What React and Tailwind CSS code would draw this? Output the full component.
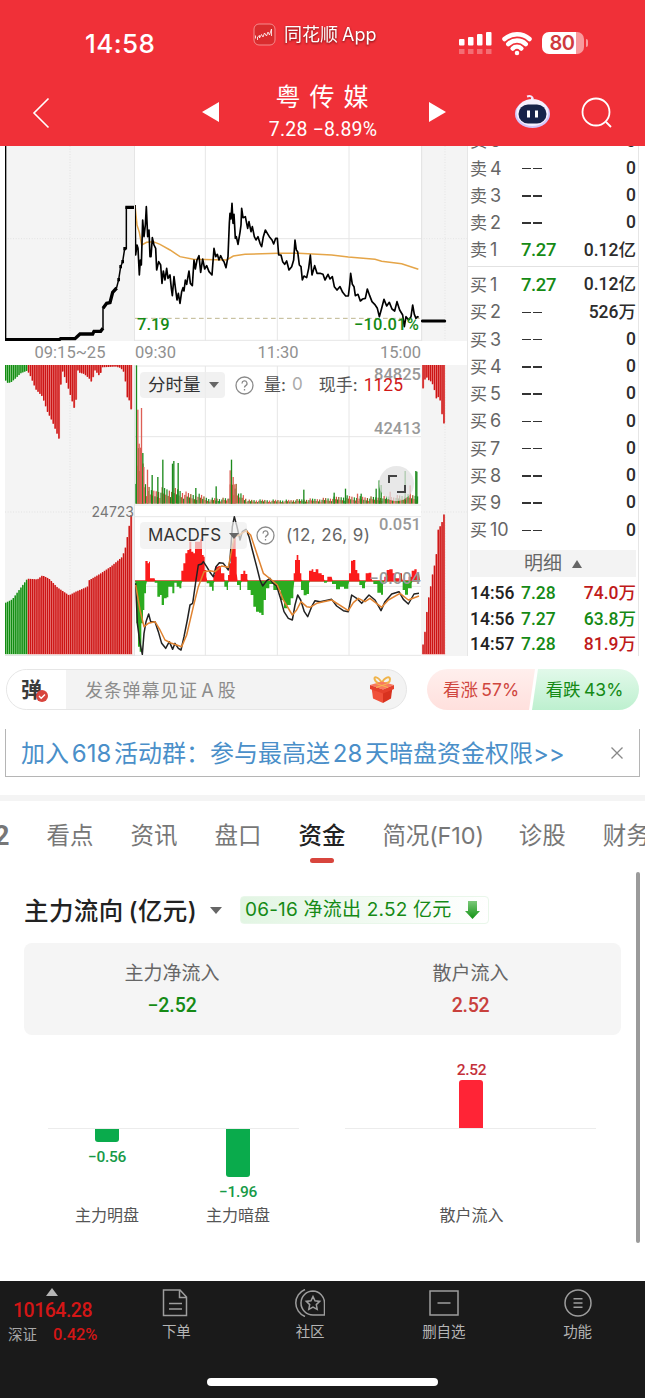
import { Wifi } from 'lucide-react';

/* Chart series are kept in thirds of a pixel, the svg viewBoxes scale them down. */
const PRICE = [
  [405, 180], [407, 330], [411, 300], [414, 310], [418, 390], [421, 345], [424, 360], [428, 225], [432, 275], [436, 240],
  [439, 185], [443, 275], [447, 255], [450, 335], [453, 335], [457, 278], [462, 300], [467, 310], [470, 375], [476, 350],
  [482, 360], [486, 415], [490, 378], [495, 405], [500, 370], [504, 400], [510, 390], [514, 430], [517, 452], [522, 395],
  [527, 435], [531, 465], [535, 445], [540, 475], [545, 440], [549, 428], [552, 438], [556, 405], [560, 418], [563, 400],
  [567, 378], [571, 415], [577, 422], [582, 345], [586, 372], [591, 345], [597, 332], [602, 382], [608, 342], [614, 372],
  [620, 362], [627, 380], [636, 390], [642, 310], [647, 335], [652, 328], [657, 345], [662, 332], [668, 345], [672, 350],
  [678, 368], [684, 335], [688, 235], [690, 205], [693, 222], [696, 175], [699, 235], [702, 208], [706, 280], [709, 275],
  [714, 298], [720, 262], [723, 240], [725, 190], [729, 218], [736, 215], [743, 250], [747, 230], [753, 260], [757, 245],
  [763, 275], [768, 285], [774, 275], [780, 295], [785, 305], [790, 275], [796, 255], [802, 265], [808, 275], [816, 285],
  [821, 297], [827, 280], [832, 280], [836, 330], [843, 330], [848, 350], [854, 358], [860, 348], [867, 375], [875, 365],
  [881, 345], [885, 285], [889, 315], [893, 320], [898, 360], [903, 365], [907, 405], [912, 393], [920, 398], [926, 370],
  [931, 330], [936, 390], [944, 362], [951, 385], [960, 385], [969, 388], [975, 405], [984, 388], [990, 402], [997, 395],
  [1003, 425], [1011, 435], [1020, 425], [1028, 442], [1037, 453], [1045, 453], [1049, 420], [1052, 385], [1057, 418], [1062, 425],
  [1066, 452], [1074, 448], [1081, 468], [1088, 462], [1096, 460], [1102, 432], [1109, 452], [1116, 470], [1124, 478], [1132, 490],
  [1138, 515], [1145, 490], [1152, 463], [1160, 483], [1168, 472], [1176, 492], [1184, 498], [1191, 470], [1199, 495], [1208, 510],
  [1213, 545], [1218, 515], [1226, 525], [1233, 515], [1238, 480], [1243, 508], [1248, 520], [1252, 515], [1256, 517],
];

const AVERAGE = [
  [405, 180], [411, 240], [418, 262], [425, 300], [440, 292], [460, 290], [480, 298], [510, 315], [540, 335], [580, 343],
  [680, 345], [700, 333], [735, 328], [835, 325], [895, 325], [995, 330], [1045, 336], [1125, 343], [1145, 349], [1205, 356], [1255, 373],
];

const AUCTION = [
  [17, 585], [178, 585], [182, 582], [225, 582], [240, 567], [278, 567], [282, 559], [302, 559], [309, 550], [309, 490],
  [320, 475], [330, 473], [334, 458], [338, 442], [350, 427], [356, 404], [362, 365], [368, 350], [374, 311], [379, 311], [379, 187], [402, 187],
];

const DIF = [
  [407, 670], [412, 790], [420, 850], [427, 883], [432, 820], [438, 785], [446, 762], [452, 785], [465, 785], [475, 815],
  [485, 850], [497, 865], [508, 845], [518, 868], [525, 850], [535, 865], [543, 870], [552, 830], [562, 780], [570, 735],
  [578, 730], [588, 660], [595, 615], [605, 612], [610, 605], [620, 620], [632, 640], [640, 650], [648, 620], [658, 608],
  [670, 610], [685, 630], [690, 600], [697, 500], [703, 470], [711, 500], [720, 540], [727, 515], [738, 508], [747, 530],
  [757, 570], [770, 620], [780, 660], [788, 678], [800, 662], [810, 655], [817, 668], [830, 678], [840, 710], [852, 755],
  [865, 775], [877, 780], [885, 735], [893, 705], [902, 720], [913, 755], [923, 770], [935, 740], [945, 722], [960, 725],
  [975, 722], [995, 718], [1010, 738], [1030, 752], [1045, 755], [1055, 705], [1070, 715], [1085, 730], [1107, 705], [1125, 720],
  [1143, 752], [1155, 725], [1175, 702], [1197, 695], [1210, 718], [1225, 732], [1242, 702], [1257, 700],
];

const DEA = [
  [407, 675], [420, 750], [432, 800], [445, 790], [465, 785], [480, 810], [495, 840], [515, 850], [545, 860], [560, 825],
  [580, 740], [595, 680], [612, 635], [630, 632], [645, 635], [665, 618], [685, 622], [695, 570], [703, 530], [718, 525],
  [738, 512], [752, 525], [770, 580], [790, 640], [815, 660], [832, 675], [850, 720], [877, 765], [890, 750], [903, 725],
  [920, 740], [930, 742], [950, 730], [995, 720], [1045, 752], [1060, 728], [1075, 715], [1095, 725], [1110, 715], [1145, 742],
  [1165, 720], [1200, 700], [1225, 720], [1257, 708],
];

// each hump is a run of points closed on the zero line
const MACD_UP = [
  [[436, 603], [440, 603], [443, 610], [447, 605], [450, 655], [464, 657]],
  [[544, 632], [550, 610], [556, 580], [562, 570], [568, 545], [574, 575], [580, 580], [585, 545], [600, 538], [606, 585], [611, 590], [614, 630], [619, 650]],
  [[640, 645], [645, 620], [655, 618], [663, 640], [673, 658]],
  [[684, 645], [688, 610], [693, 560], [699, 520], [704, 530], [707, 590], [710, 640]],
  [[722, 642], [730, 632], [736, 642], [742, 658]],
  [[881, 640], [885, 600], [890, 585], [895, 600], [900, 640], [904, 658]],
  [[927, 632], [935, 628], [940, 636], [947, 628], [955, 640], [965, 645], [972, 658]],
  [[982, 650], [995, 650]],
  [[1047, 640], [1053, 602], [1059, 600], [1066, 630], [1072, 640], [1078, 658]],
  [[1097, 640], [1106, 638], [1114, 652]],
  [[1153, 650], [1160, 630], [1168, 628], [1178, 640], [1186, 655], [1198, 640], [1206, 655]],
  [[1226, 650], [1235, 632], [1243, 628], [1250, 640], [1257, 640]],
];
const MACD_DOWN = [
  [[406, 680], [409, 790], [414, 860], [419, 875], [424, 790], [429, 750], [433, 700], [438, 675]],
  [[464, 668], [472, 710], [480, 705], [485, 735], [492, 715], [500, 712], [505, 680], [517, 700], [523, 668], [530, 680], [538, 685], [544, 672]],
  [[620, 670], [628, 680], [636, 692], [641, 670]],
  [[673, 680], [680, 690], [684, 670]],
  [[711, 675], [719, 690], [723, 668]],
  [[742, 690], [752, 705], [760, 740], [768, 755], [777, 758], [784, 765], [791, 720], [798, 685], [808, 672], [820, 690], [832, 690], [842, 720], [852, 745], [862, 735], [872, 715], [880, 690]],
  [[903, 690], [911, 706], [920, 702], [927, 670]],
  [[972, 668], [980, 668]],
  [[996, 672], [1008, 688], [1020, 680], [1032, 686], [1045, 675]],
  [[1078, 675], [1086, 685], [1095, 670]],
  [[1120, 672], [1132, 698], [1143, 704], [1149, 675]],
  [[1208, 690], [1215, 704], [1224, 685], [1235, 670]],
];

// upper envelope of the minute volume bars, then the isolated spikes
const VOLUME_LEVEL = [
  [405, 170], [426, 150], [436, 60], [450, 40], [490, 48], [535, 45], [560, 32], [600, 28], [625, 18], [684, 16],
  [690, 80], [706, 60], [712, 30], [725, 36], [740, 12], [870, 12], [985, 18], [1035, 24], [1120, 20], [1200, 26], [1258, 28],
];
const VOLUME_SPIKES = [
  [409, 415, 'g'], [413, 282, 'r'], [417, 180, 'r'], [421, 168, 'r'], [424, 287, 'r'], [428, 152, 'g'], [431, 110, 'r'], [442, 102, 'r'],
  [456, 86, 'g'], [473, 80, 'g'], [488, 132, 'g'], [517, 120, 'g'], [521, 128, 'g'], [534, 122, 'g'], [587, 47, 'g'], [648, 52, 'g'],
  [690, 100, 'r'], [694, 132, 'g'], [699, 80, 'r'], [704, 58, 'r'], [911, 42, 'g'], [1002, 33, 'g'], [1036, 45, 'g'], [1072, 30, 'r'],
  [1083, 30, 'g'], [1128, 45, 'g'], [1137, 70, 'g'], [1143, 56, 'g'], [1170, 36, 'r'], [1215, 98, 'g'], [1230, 55, 'r'], [1247, 98, 'g'], [1250, 96, 'g'],
];

const AUCTION_TOP = [
  [15, 62], [22, 70], [32, 66], [45, 55], [60, 40], [80, 32], [90, 50], [105, 88], [125, 110], [140, 155], [155, 185],
  [178, 245], [181, 22], [188, 40], [205, 92], [225, 160], [228, 25], [235, 38], [250, 42], [265, 55], [275, 70], [280, 28],
  [298, 50], [303, 22], [345, 20], [360, 24], [372, 40], [378, 110], [385, 118], [390, 150], [398, 138],
];
const AUCTION_BOTTOM = [
  [15, 728], [35, 718], [55, 690], [80, 656], [110, 658], [125, 646], [145, 656], [170, 682], [205, 706], [225, 695],
  [260, 680], [263, 662], [300, 640], [330, 620], [365, 590], [375, 560], [385, 500], [391, 470], [394, 395], [399, 395],
];
const AFTER_TOP = [[1266, 90], [1275, 48], [1283, 60], [1293, 66], [1300, 85], [1308, 120], [1316, 105], [1325, 170], [1333, 205]];
const AFTER_BOTTOM = [[1266, 860], [1275, 800], [1280, 735], [1288, 690], [1296, 640], [1306, 595], [1312, 510], [1323, 490], [1333, 450]];

const SELLS = [
  ['卖5', '--', '0'],
  ['卖4', '--', '0'],
  ['卖3', '--', '0'],
  ['卖2', '--', '0'],
  ['卖1', '7.27', '0.12亿'],
];
const BUYS = [
  ['买1', '7.27', '0.12亿'],
  ['买2', '--', '526万'],
  ['买3', '--', '0'],
  ['买4', '--', '0'],
  ['买5', '--', '0'],
  ['买6', '--', '0'],
  ['买7', '--', '0'],
  ['买8', '--', '0'],
  ['买9', '--', '0'],
  ['买10', '--', '0'],
];
const TRADES = [
  ['14:56', '7.28', '74.0万', 'text-[#c01a1a]'],
  ['14:56', '7.27', '63.8万', 'text-[#158a15]'],
  ['14:57', '7.28', '81.9万', 'text-[#c01a1a]'],
];
const TABS = ['看点', '资讯', '盘口', '资金', '简况(F10)', '诊股', '财务'];

const toPoints = (list) => list.map((p) => p.join(',')).join(' ');

const levelAt = (list, x) => {
  const i = list.findIndex((p) => p[0] >= x);
  if (i <= 0) return i === 0 ? list[0][1] : list[list.length - 1][1];
  const [x0, y0] = list[i - 1];
  const [x1, y1] = list[i];
  return y0 + ((y1 - y0) * (x - x0)) / (x1 - x0);
};

const steps = (from, to, step) => Array.from({ length: Math.floor((to - from) / step) }, (_, i) => from + i * step);

const humpPath = (hump) => {
  const first = hump[0][0];
  const last = hump[hump.length - 1][0];
  return `M${first} 663 ${hump.map(([x, y], i) => `L${x} ${y}${hump[i + 1] ? ` H${hump[i + 1][0]}` : ''}`).join(' ')} L${last + 3} 663Z`;
};

const AuctionBars = ({ top, bottom, from, to, greenUntil = 0 }) => (
  <g>
    {steps(from, to, 5.7).map((x) => {
      const color = x < greenUntil ? '#128c12' : '#cc1414';
      const soft = x < greenUntil ? '#b9ecb4' : '#f9a3a0';
      const yTop = levelAt(top, x);
      const yBottom = levelAt(bottom, x);
      return (
        <g key={x}>
          <rect x={x} y="15" width="5.7" height={yTop - 17} fill={soft} />
          <rect x={x} y={yBottom + 2} width="5.7" height={882 - yBottom} fill={soft} />
          <rect x={x} y="15" width="4.3" height={yTop - 15} fill={color} />
          <rect x={x} y={yBottom} width="4.3" height={882 - yBottom} fill={color} />
        </g>
      );
    })}
  </g>
);

const PriceRow = () => (
  <div className="flex h-[195px]">
    <svg className="h-full w-[130px] bg-[#f4f4f4]" viewBox="15 3 390 585">
      <path d="M210 3V588M15 281H405" stroke="#e2e2e2" strokeWidth="3" strokeDasharray="3 5" />
      <path d="M404 3V588" stroke="#e2e2e2" strokeWidth="3" />
      <path d="M17 3V588" stroke="#000" strokeWidth="4" />
      <polyline points={toPoints(AUCTION)} fill="none" stroke="#000" strokeWidth="4.5" />
      <path d="M17 584H178L182 581H225L240 567H278L282 559H302L309 550M309 490L320 475L330 473L338 442L350 429M376 187H402M352 404h8M358 365h8M364 350h8M370 311h8" fill="none" stroke="#000" strokeWidth="10" />
    </svg>
    <div className="relative h-full w-[286px]">
      <svg className="h-full w-full" viewBox="405 3 858 585">
        <path d="M616 3V588M832 3V588M1047 3V588M405 281H1263M405 586H1263" stroke="#e6e6e6" strokeWidth="3" />
        <path d="M405 520H1263" stroke="#bfb690" strokeWidth="3" strokeDasharray="14 10" />
        <polyline points={toPoints(AVERAGE)} fill="none" stroke="#e5a548" strokeWidth="4.5" />
        <polyline points={toPoints(PRICE)} fill="none" stroke="#000" strokeWidth="5" strokeLinejoin="round" />
      </svg>
      <span className="absolute bottom-[7px] left-[2px] font-[Roboto] text-[16.5px] leading-[18px] font-medium text-[#158a15]">7.19</span>
      <span className="absolute right-[2px] bottom-[7px] font-[Roboto] text-[16.5px] leading-[18px] font-medium tracking-[0.2px] text-[#158a15]">−10.01%</span>
    </div>
    <svg className="h-full w-[46px] bg-[#f4f4f4]" viewBox="1263 3 138 585">
      <path d="M1335 3V588M1263 281H1401" stroke="#e4e4e4" strokeWidth="3" strokeDasharray="3 5" />
      <path d="M1265 3V588" stroke="#e2e2e2" strokeWidth="3" />
      <path d="M1267 528H1334" stroke="#000" strokeWidth="9" strokeLinecap="round" />
    </svg>
  </div>
);

const VolumeBars = () => (
  <g>
    {steps(406, 1256, 3.58).map((x, i) => {
      const jitter = 0.35 + (((i * 7919) % 31) / 31) * 0.75;
      const height = Math.max(4, levelAt(VOLUME_LEVEL, x) * jitter);
      const color = ['#1c8a1c', '#e0584e', '#8a5a14', '#1c8a1c', '#c8503c'][(i * 13 + (i % 7)) % 5];
      return <rect key={x} x={x} y={431 - height} width="3.6" height={height} fill={color} />;
    })}
    {VOLUME_SPIKES.map(([x, height, side]) => (
      <rect key={x} x={x - 1.5} y={431 - height} width="4" height={height} fill={side === 'g' ? '#1c8a1c' : '#dd5f55'} />
    ))}
  </g>
);

const HelpMark = () => (
  <svg className="size-[19px]" viewBox="0 0 19 19" fill="none" stroke="#8a8a8a" strokeWidth="1.3">
    <circle cx="9.5" cy="9.5" r="8.5" />
    <path d="M7 7.4a2.5 2.5 0 1 1 3.7 2.2c-.8.5-1.2.9-1.2 2M9.5 13v1.5" />
  </svg>
);

const IndicatorRow = () => (
  <div className="flex h-[291px]">
    <div className="relative h-full w-[130px] bg-[#f4f4f4]">
      <svg className="h-full w-full" viewBox="15 15 390 873">
        <path d="M210 15V888M15 456H405" stroke="#e2e2e2" strokeWidth="3" strokeDasharray="3 5" />
        <AuctionBars top={AUCTION_TOP} bottom={AUCTION_BOTTOM} from={15} to={402} greenUntil={78} />
        <path d="M404 15V888M15 886H405" stroke="#e2e2e2" strokeWidth="3" />
      </svg>
      <span className="absolute top-[138px] right-[1px] font-[Inter] text-[14px] leading-[18px] text-[#777]">24723</span>
    </div>
    <div className="relative h-full w-[286px]">
      <svg className="h-full w-full" viewBox="405 15 858 873">
        <path d="M405 18H1263M405 230H1263M405 435H1263M405 470H1263M405 679H1263M405 886H1263M616 18V435M832 18V435M1047 18V435M616 470V886M832 470V886M1047 470V886" stroke="#e6e6e6" strokeWidth="3" />
        <VolumeBars />
        <path d="M405 663H1258" stroke="#c33a1c" strokeWidth="4" />
        <path d={MACD_UP.map(humpPath).join('')} fill="#fb1b1b" />
        <path d={MACD_DOWN.map(humpPath).join('')} fill="#2bab20" />
        <polyline points={toPoints(DIF)} fill="none" stroke="#222" strokeWidth="4.5" strokeLinejoin="round" />
        <polyline points={toPoints(DEA)} fill="none" stroke="#e08330" strokeWidth="4.5" strokeLinejoin="round" />
      </svg>

      <div className="absolute top-[7px] left-[5px] flex h-[26px] items-center text-[17px] text-[#555]">
        <button type="button" className="flex h-[26px] w-[85px] items-center gap-2 rounded-sm bg-[#eeeeee]/80 pl-2 text-[#333]">
          <span className="pt-px text-[17.5px]">分时量</span>
          <span className="border-x-5 border-t-6 border-x-transparent border-t-[#666]" />
        </button>
        <span className="ml-[10px]"><HelpMark /></span>
        <span className="ml-[10px] pt-px">量:</span>
        <span className="ml-[6px] text-[#aaa]">0</span>
        <span className="ml-[16px] pt-px">现手:</span>
      </div>
      <span className="absolute top-[1px] right-0 font-[Roboto] text-[16.5px] leading-[18px] font-medium text-[#999]">84825</span>
      <span className="absolute top-[11px] right-[18px] font-[Roboto] text-[17.5px] leading-[18px] text-[#d01818]">1125</span>
      <span className="absolute top-[55px] right-0 font-[Roboto] text-[16.5px] leading-[18px] font-medium text-[#999]">42413</span>
      <span className="absolute top-[101px] right-[7px] flex size-[35px] items-center justify-center rounded-full bg-[#e0e0e0]/75">
        <svg className="size-[18px]" viewBox="0 0 18 18" fill="none" stroke="#444" strokeWidth="2">
          <path d="M1 8V1h8M17 10v7h-8" />
        </svg>
      </span>

      <div className="absolute top-[157px] left-[5px] flex h-[27px] items-center text-[17px] text-[#666]">
        <button type="button" className="flex h-[27px] w-[107px] items-center gap-2 rounded-sm bg-[#eeeeee]/70 pl-2 text-[#333]">
          <span className="text-[17px] tracking-[0.2px]">MACDFS</span>
          <span className="border-x-5 border-t-6 border-x-transparent border-t-[#666]" />
        </button>
        <span className="ml-[9px]"><HelpMark /></span>
        <span className="ml-[11px] text-[17px] tracking-[0.4px]">(12, 26, 9)</span>
      </div>
      <span className="absolute top-[151px] right-0 font-[Roboto] text-[16.5px] leading-[18px] font-medium text-[#999]">0.051</span>
      <span className="absolute top-[205px] right-0 font-[Roboto] text-[16.5px] leading-[18px] font-medium text-[#999]">−0.004</span>
    </div>
    <svg className="h-full w-[46px] bg-[#f4f4f4]" viewBox="1263 15 138 873">
      <path d="M1335 15V888M1263 456H1401" stroke="#e4e4e4" strokeWidth="3" strokeDasharray="3 5" />
      <AuctionBars top={AFTER_TOP} bottom={AFTER_BOTTOM} from={1267} to={1338} />
    </svg>
  </div>
);

const BookRow = ({ row }) => {
  const [label, price, volume] = row;
  return (
    <div className="flex h-[27.25px] shrink-0 items-center leading-none">
      <span className="w-[51px] text-[17px] whitespace-nowrap text-[#666]">
        {label[0]}
        <span className="ml-[3px] text-[18px]">{label.slice(1)}</span>
      </span>
      {price === '--' ? (
        <span className="ml-px flex gap-[2px]">
          <span className="h-[1.5px] w-[9px] bg-[#333]" />
          <span className="h-[1.5px] w-[9px] bg-[#333]" />
        </span>
      ) : (
        <span className="font-[Roboto] text-[18.5px] font-medium tracking-[-0.4px] text-[#158a15]">{price}</span>
      )}
      <span className="ml-auto font-[Roboto,'Noto_Sans_CJK_SC',sans-serif] text-[17.5px] font-medium text-[#2c2c2c]">{volume}</span>
    </div>
  );
};

const OrderBook = () => (
  <div className="flex h-[510px] w-[172px] flex-col border-x border-[#e6e6e6] pr-[2px] pl-[2px]">
    <div className="flex h-[120px] shrink-0 flex-col justify-end overflow-hidden pb-[2px]">
      {SELLS.map((row) => <BookRow key={row[0]} row={row} />)}
    </div>
    <div className="-mr-[2px] -ml-[2px] h-px shrink-0 bg-[#e2e2e2]" />
    <div className="pt-[4.5px]">
      {BUYS.map((row) => <BookRow key={row[0]} row={row} />)}
    </div>
    <div className="mt-[6px] flex h-[27px] shrink-0 items-center justify-center gap-[10px] bg-[#f3f3f3] pt-px text-[19px] text-[#666]">
      明细
      <span className="border-x-[5.5px] border-b-8 border-x-transparent border-b-[#666]" />
    </div>
    <div className="mt-[4px]">
      {TRADES.map(([time, price, amount, tone], i) => (
        <div key={i} className="flex h-[25.5px] items-center font-[Roboto,'Noto_Sans_CJK_SC',sans-serif] text-[18px] leading-none font-medium">
          <span className="w-[51px] text-[17.5px] text-[#222]">{time}</span>
          <span className="text-[17.5px] text-[#158a15]">{price}</span>
          <span className={`ml-auto text-[17.5px] ${tone}`}>{amount}</span>
        </div>
      ))}
    </div>
  </div>
);

const Header = () => (
  <header className="h-[146px] bg-[#f03038] text-white">
    <div className="flex h-[70px] items-start">
      <span className="mt-[31px] ml-[85px] w-[168px] text-[26px] leading-[26px] font-medium tracking-[0.4px]">14:58</span>
      <div className="mt-[22px] flex h-6 items-center gap-2">
        <svg className="size-[23px]" viewBox="0 0 23 23" fill="none" stroke="#fff">
          <rect x="1" y="1" width="21" height="21" rx="5" fill="#d92c2e" stroke="#f58a8c" />
          <path d="M2.500 15.500v-3M4.500 17v-3l2-1.500v2.500l2-3.500 1.500 2.500 1.500-4 2 3 1.500-4 1.500 3 2-6v7" strokeWidth=".8" />
        </svg>
        <span className="text-[18px] text-white drop-shadow-[0_1px_1px_rgba(60,0,0,0.7)] [word-spacing:-1px]">同花顺 App</span>
      </div>
      <div className="mt-[31px] ml-[82px] flex h-6 items-center">
        <svg className="h-6 w-[34px]" viewBox="0 0 34 24" fill="#fff">
          <rect x="0" y="8" width="5.500" height="6.500" rx="1" />
          <rect x="9" y="6" width="5.500" height="8.500" rx="1" />
          <rect x="18" y="3" width="5.500" height="11.500" rx="1" />
          <rect x="27" y="1" width="5.500" height="13.500" rx="1" />
          <path fillOpacity=".3" d="M0 18h5.500v5H0zM9 18h5.500v5H9zM18 18h5.500v5H18zM27 18h5.500v5H27z" />
        </svg>
        <Wifi className="ml-[9px] size-[30px]" strokeWidth={3.6} />
        <span className="ml-[10px] flex h-[22px] w-[42px] items-center rounded-[7px] bg-linear-to-r from-white from-80% to-[#f89a9d] to-80% pl-[8px] text-[20px] leading-none font-semibold tracking-[-0.5px] text-[#cf3a3e]">80</span>
        <span className="ml-[2px] h-2 w-[2px] rounded-r bg-[#f89a9d]" />
      </div>
    </div>
    <div className="flex h-[76px] items-start">
      <svg className="mt-[27px] ml-[32px] h-[32px] w-[18px]" viewBox="0 0 18 32" fill="none" stroke="#fff" strokeWidth="1.600">
        <path d="M16.500 1.500L2 16l14.500 14.500" />
      </svg>
      <span className="mt-[32px] ml-[152px] border-y-10 border-r-17 border-y-transparent border-r-white" />
      <div className="mx-[2px] flex w-[206px] flex-col items-center pt-[11px]">
        <h1 className="pl-[5px] text-[25px] leading-[32px] tracking-[9px]">粤传媒</h1>
        <p className="mt-[7px] -ml-[2px] font-[Roboto] text-[19.5px] leading-[20px] tracking-[0.2px]">7.28 −8.89%</p>
      </div>
      <span className="mt-[32px] border-y-10 border-l-17 border-y-transparent border-l-white" />
      <svg className="mt-[24px] ml-[68px] h-[35px] w-[37px]" viewBox="0 0 37 35">
        <path d="M18 8V4M13 2.500Q18 1 19 5" stroke="#f3eaff" strokeWidth="2" fill="none" />
        <ellipse cx="18.500" cy="20" rx="17.500" ry="14" fill="#d3c5fa" />
        <ellipse cx="18.500" cy="18.500" rx="16" ry="13.500" fill="#f5f1ff" />
        <rect x="4.500" y="10.500" width="28" height="19" rx="9.500" fill="#17234a" />
        <path d="M14.500 16.500v7M22.500 16.500v7" stroke="#fff" strokeWidth="3" />
      </svg>
      <svg className="mt-[27px] ml-[30px] size-[32px]" viewBox="0 0 32 32" fill="none" stroke="#fff" strokeWidth="1.800">
        <circle cx="15" cy="15" r="13.500" />
        <path d="M25 25l5 5" />
      </svg>
    </div>
  </header>
);

const Gift = () => (
  <svg className="h-[28px] w-[26px]" viewBox="0 0 26 28">
    <path d="M13 7C9 0 4 0 6 4q1 3 7 4C19 7 21 7 21 3c0-3-6-2-8 4" fill="none" stroke="#f0b44a" strokeWidth="2" />
    <path d="M2.500 11L14 15v12L4 22.500z" fill="#f0503a" />
    <path d="M23.500 11L14 15v12l8-4.500z" fill="#d8321f" />
    <path d="M1 9l12-3.500L25 9l-11 4.500z" fill="#f97a5e" />
    <path d="M1 9l13 4.500L25 9v4l-11 4.500L1 13z" fill="#e5402c" />
    <path d="M7 7.500l12 4M19 7.500l-12 4" stroke="#f6b950" strokeWidth="1" />
  </svg>
);

const DanmuRow = () => (
  <div className="mt-[13px] flex h-[41px] items-center pl-[6px]">
    <div className="flex h-full w-[401px] items-center overflow-hidden rounded-full border border-[#e6e6e6] bg-[#f3f3f3]">
      <div className="relative flex h-full w-[59px] items-center bg-white pl-[14px] text-[21px] font-bold text-[#3b3b3b]">
        弹
        <svg className="absolute top-[20px] left-[29px] size-[12px]" viewBox="0 0 12 12">
          <circle cx="6" cy="6" r="6" fill="#d8453d" />
          <path d="M3 6l2.200 2.200L9 4.400" fill="none" stroke="#fff" strokeWidth="1.400" />
        </svg>
      </div>
      <span className="ml-[19px] pt-[2px] text-[18px] tracking-[0.8px] text-[#8c8c8c] [word-spacing:-2.5px]">发条弹幕见证 A 股</span>
      <span className="mr-[11px] ml-auto"><Gift /></span>
    </div>
    <button type="button" className="ml-[20px] h-full w-[108px] rounded-l-full bg-linear-to-b from-[#ffefed] to-[#ffe0dd] pt-[2px] text-[17.5px] text-[#cf463e] [clip-path:polygon(0_0,100%_0,calc(100%-6px)_100%,0_100%)] [word-spacing:-1.5px]">
      看涨 57%
    </button>
    <button type="button" className="-ml-[3px] h-full w-[107px] rounded-r-full bg-linear-to-b from-[#e2f9ea] to-[#bdf0cf] pt-[2px] pr-[2px] text-[17.5px] text-[#158a15] [clip-path:polygon(6px_0,100%_0,100%_100%,0_100%)] [word-spacing:-1.5px]">
      看跌 43%
    </button>
  </div>
);

const Banner = () => (
  <div className="mt-[19px] mr-[5px] ml-[5px] flex h-[48px] items-center justify-between border-x border-b border-[#b5b5b5] pr-[16px] pl-[15px]">
    <span className="pt-[2px] text-[24px] whitespace-nowrap text-[#4a8fc9] [word-spacing:-4px]">加入 618 活动群：参与最高送 28 天暗盘资金权限&gt;&gt;</span>
    <svg className="size-[12px]" viewBox="0 0 12 12" stroke="#888" strokeWidth="1.300">
      <path d="M.5.5l11 11M11.500.5l-11 11" />
    </svg>
  </div>
);

const Tabs = () => (
  <nav className="flex h-[70px] gap-[37px] overflow-hidden pt-[17px] text-[23.5px] leading-[36px] whitespace-nowrap text-[#777]">
    <span className="-ml-[6px] w-[18px] text-right font-[Roboto] text-[27px] font-bold">2</span>
    {TABS.map((tab) => (
      <span key={tab} className={tab === '资金' ? 'flex flex-col items-center font-medium text-[#222]' : tab === '简况(F10)' ? '-mr-[2px] tracking-[-0.15px]' : undefined}>
        {tab}
        {tab === '资金' && <span className="mt-[4px] h-[5px] w-[24px] rounded-full bg-[#d8453d]" />}
      </span>
    ))}
  </nav>
);

const FlowBar = ({ value, label, up, height }) => (
  <div className="flex w-[131px] shrink-0 flex-col items-center text-[16px] text-[#555]">
    <div className="flex h-[68px] flex-col items-center justify-end font-[Roboto] leading-[20px] font-medium text-[#c4303a]">
      {up && <span className="text-[15.5px] tracking-[-0.3px]">{value}</span>}
      {up && <span className="w-[24px] rounded-t-[3px] bg-[#ff2436]" style={{ height }} />}
    </div>
    <div className="h-px w-full" />
    <div className="flex h-[76px] flex-col items-center font-[Roboto] leading-[20px] font-medium text-[#169a47]">
      {!up && <span className="mb-[5px] w-[24px] rounded-b-[3px] bg-[#0aab4c]" style={{ height }} />}
      {!up && <span className="text-[15.5px] tracking-[-0.3px]">{value}</span>}
    </div>
    <span className="leading-[20px]">{label}</span>
  </div>
);

const FundFlow = () => (
  <section className="flex h-[410px] justify-between">
    <div className="w-[597px] pt-[23px] ml-[24px]">
      <div className="flex h-[32px] items-center">
        <h2 className="pt-[2px] text-[24.5px] font-medium tracking-[0.4px] whitespace-nowrap text-[#222] [word-spacing:-2px]">主力流向 (亿元)</h2>
        <span className="ml-auto border-x-[6.5px] border-t-7 border-x-transparent border-t-[#666]" />
        <div className="mr-[132px] ml-[18px] flex h-[28px] w-[249px] items-center justify-between rounded-sm border border-[#e9f7ea] bg-linear-to-r from-[#e2f5e3] to-white pr-[8px] pl-[4px] text-[#158a15]">
          <span className="text-[19px] tracking-[0.2px] whitespace-nowrap">06-16 净流出 2.52 亿元</span>
          <svg className="h-[18px] w-[15px]" viewBox="0 0 15 18">
            <defs>
              <linearGradient id="drop" x1="0" y1="0" x2="0" y2="1">
                <stop offset="0" stopColor="#7cc97a" />
                <stop offset="1" stopColor="#109212" />
              </linearGradient>
            </defs>
            <path d="M3 0h9v10h3l-7.500 8L0 10h3z" fill="url(#drop)" />
          </svg>
        </div>
      </div>
      <div className="mt-[17px] flex h-[92px] rounded-lg bg-[#f5f5f5] text-center">
        <div className="w-[296px] pt-[18px]">
          <p className="text-[19px] leading-[26px] text-[#666]">主力净流入</p>
          <p className="mt-[7px] font-[Roboto] text-[19.5px] leading-[24px] font-medium text-[#158a15]">−2.52</p>
        </div>
        <div className="w-[301px] pt-[18px]">
          <p className="text-[19px] leading-[26px] text-[#666]">散户流入</p>
          <p className="mt-[7px] font-[Roboto] text-[19.5px] leading-[24px] font-medium tracking-[-0.3px] text-[#c8403c]">2.52</p>
        </div>
      </div>
      <div className="mt-[25px] flex justify-between pr-[25px] pl-[24px]">
        <div className="flex w-[251px] justify-center bg-[linear-gradient(#ececec,#ececec)] bg-[length:100%_1px] bg-[position:0_68px] bg-no-repeat pr-[2px]">
          <FlowBar value="−0.56" label="主力明盘" height={13} />
          <FlowBar value="−1.96" label="主力暗盘" height={48} />
        </div>
        <div className="flex w-[251px] justify-center bg-[linear-gradient(#ececec,#ececec)] bg-[length:100%_1px] bg-[position:0_68px] bg-no-repeat pl-[2px]">
          <FlowBar value="2.52" label="散户流入" up height={48} />
        </div>
      </div>
    </div>
    <div className="mt-px mr-[5px] h-[371px] w-[4px] rounded-full bg-[#9b9b9b]" />
  </section>
);

const NAV = [
  ['下单', <path key="p" d="M1.500 1h16.500l6.500 7v18.500h-23zM17.500 1v7.500h7M7 14.500h13M7 20h13" />],
  [
    '社区',
    <g key="p">
      <path d="M17 2a12 12 0 1 0 0 24h11.500V14A12 12 0 0 0 17 2M9 .5A14.500 14.500 0 0 0 9 27.500" />
      <path d="M17 7.500l2 4.300 4.700.6-3.400 3.200.9 4.700-4.200-2.300-4.200 2.300.9-4.700-3.400-3.200 4.700-.6z" />
    </g>,
  ],
  ['删自选', <path key="p" d="M0 2h28v24H0zM7.500 14h13" />],
  [
    '功能',
    <g key="p">
      <circle cx="14" cy="14" r="13" />
      <path d="M9.500 9.800h9M9.500 14h9M9.500 18.200h9" />
    </g>,
  ],
];

const BottomBar = () => (
  <footer className="h-[117px] bg-[#1a1a1a]">
    <div className="flex h-[97px]">
      <div className="w-[110px] shrink-0 pt-[7px] text-[#d41616]">
        <span className="ml-[46px] block w-0 border-x-[6.5px] border-b-8 border-x-transparent border-b-[#b5b5b5]" />
        <p className="mt-[3px] ml-[13px] font-[Roboto] text-[19.5px] leading-[24px] font-medium tracking-[-0.5px]">10164.28</p>
        <p className="flex items-center pl-[8px] leading-[24px]">
          <span className="w-[45px] text-[14.500px] text-[#a8a8a8]">深证</span>
          <span className="font-[Roboto] text-[16.5px] font-medium tracking-[-0.1px]">0.42%</span>
        </p>
      </div>
      {NAV.map(([label, icon]) => (
        <div key={label} className="flex flex-1 flex-col items-center pt-[8px] pr-px text-[14.500px] leading-[22px] text-[#b5b5b5]">
          <svg className="mb-[4px] h-[28px] w-[30px]" viewBox="-1 0 30 28" fill="none" stroke="#9d9d9d" strokeWidth="1.500">{icon}</svg>
          {label}
        </div>
      ))}
    </div>
    <div className="mx-auto h-[8px] w-[231px] rounded-full bg-white" />
  </footer>
);

const App = () => (
  <div className="h-[1398px] w-[645px] overflow-hidden bg-white font-[Inter,'Noto_Sans_CJK_SC',sans-serif]">
    <Header />
    <div className="flex h-[510px] pl-[5px]">
      <div className="w-[462px] shrink-0">
        <PriceRow />
        <div className="flex h-[24px] items-center pt-px font-[Roboto] text-[16.5px] leading-none text-[#909090]">
          <span className="w-[130px] text-center">09:15~25</span>
          <span className="flex w-[286px] justify-between">
            <span>09:30</span>
            <span>11:30</span>
            <span>15:00</span>
          </span>
        </div>
        <IndicatorRow />
      </div>
      <OrderBook />
    </div>
    <DanmuRow />
    <Banner />
    <div className="mt-[18px] h-[6px] bg-[#f4f4f4]" />
    <Tabs />
    <FundFlow />
    <BottomBar />
  </div>
);

export default App;
